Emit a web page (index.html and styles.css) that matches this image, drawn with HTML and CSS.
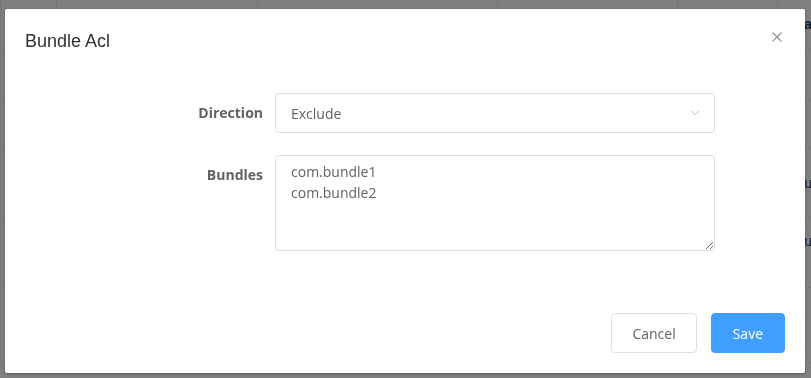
FILE: index.html
```html
<!DOCTYPE html>
<html lang="en">
<head>
    <meta charset="UTF-8">
    <meta name="viewport" content="width=device-width, initial-scale=1.0">
    <title>Bundle Acl</title>
    <link rel="stylesheet" href="styles.css">
</head>
<body>
    <!-- page behind the modal -->
    <table class="grid">
        <tr class="grid-head">
            <td class="c1"></td><td class="c2"></td><td class="c3"></td><td class="c4"></td><td class="c5"></td><td class="c6">Status</td>
        </tr>
        <tr class="r1"><td></td><td></td><td></td><td></td><td></td><td></td></tr>
        <tr class="r2"><td></td><td></td><td></td><td></td><td></td><td></td></tr>
        <tr class="r3"><td></td><td></td><td></td><td></td><td></td><td>Public</td></tr>
        <tr class="r4"><td></td><td></td><td></td><td></td><td></td><td class="top">Public</td></tr>
        <tr class="r5"><td></td><td></td><td></td><td></td><td></td><td></td></tr>
    </table>

    <div class="overlay">
        <div class="dialog">
            <div class="dialog-header">
                <span class="dialog-title">Bundle Acl</span>
                <button class="dialog-close" aria-label="Close">
                    <svg width="10" height="10" viewBox="0 0 10 10">
                        <path d="M0.5 0.5 L9.5 9.5 M9.5 0.5 L0.5 9.5" stroke="#909399" stroke-width="1.2" fill="none"/>
                    </svg>
                </button>
            </div>

            <div class="dialog-body">
                <form class="acl-form">
                    <div class="form-item">
                        <label class="form-label">Direction</label>
                        <div class="select">
                            <span>Exclude</span>
                            <svg class="select-arrow" width="10" height="6" viewBox="0 0 10 6">
                                <path d="M1 0.8 L5 4.8 L9 0.8" stroke="#b4b8c0" stroke-width="1" fill="none"/>
                            </svg>
                        </div>
                    </div>
                    <div class="form-item">
                        <label class="form-label" for="bundles">Bundles</label>
                        <textarea id="bundles" class="textarea" rows="4">com.bundle1
com.bundle2</textarea>
                    </div>
                </form>
            </div>

            <div class="dialog-footer">
                <button class="btn">Cancel</button>
                <button class="btn btn-primary">Save</button>
            </div>
        </div>
    </div>
</body>
</html>
```

FILE: styles.css
```css
* {
    box-sizing: border-box;
}

body {
    margin: 0;
    font-family: "Liberation Sans", Arial, sans-serif;
    background: #fff;
    overflow: hidden;
}

/* table behind the overlay */
.grid {
    border-collapse: collapse;
    width: 900px;
    margin-top: -1px;
    font-size: 14px;
    font-weight: bold;
    color: #606266;
}
.grid td {
    border-bottom: 1px solid #ebeef5;
    border-left: 1px solid #ebeef5;
    padding: 0 10px;
    white-space: nowrap;
}
.grid .c1 { width: 56px; }
.grid .c2 { width: 201px; }
.grid .c3 { width: 240px; }
.grid .c4 { width: 180px; }
.grid .c5 { width: 100px; }
.grid-head { height: 50px; }
.grid-head .c6 { color: #303133; padding-left: 12px; vertical-align: top; line-height: 50px; }
.grid-head td { line-height: 1; }
.r1 { height: 51px; }
.r2 { height: 48px; }
.r3 { height: 69px; }
.r4 { height: 70px; }
.r3 td, .r4 td { font-weight: normal; padding-left: 17px; color: #303133; }
.r4 .top { vertical-align: top; padding-top: 15px; }
.r5 { height: 75px; }

.overlay {
    position: fixed;
    top: 0;
    left: 0;
    right: 0;
    bottom: 0;
    background: rgba(0, 0, 0, 0.5);
}

.dialog {
    position: relative;
    width: 800px;
    margin: 9px 0 0 5px;
    background: #fff;
    border-radius: 2px;
    box-shadow: 0 1px 3px rgba(0, 0, 0, 0.3);
}

.dialog-header {
    padding: 20px 20px 10px;
}
.dialog-title {
    display: block;
    font-size: 18px;
    line-height: 24px;
    color: #303133;
}
.dialog-close {
    position: absolute;
    top: 23px;
    right: 23px;
    width: 10px;
    height: 10px;
    padding: 0;
    border: 0;
    background: none;
    display: flex;
}

.dialog-body {
    padding: 30px 20px;
}

.acl-form {
    margin-left: 150px;
    width: 540px;
    font-family: "Open Sans", "Liberation Sans", sans-serif;
    font-size: 14px;
    color: #606266;
}

.form-item {
    display: flex;
    margin-bottom: 22px;
}

.form-label {
    width: 100px;
    flex: none;
    padding-right: 12px;
    text-align: right;
    line-height: 40px;
    font-weight: 700;
    color: #606266;
}

.select {
    flex: 1;
    height: 40px;
    display: flex;
    align-items: center;
    justify-content: space-between;
    padding: 0 14px 0 15px;
    border: 1px solid #dcdfe6;
    border-radius: 4px;
}

.textarea {
    flex: 1;
    height: 96px;
    padding: 5px 15px;
    border: 1px solid #dcdfe6;
    border-radius: 4px;
    font-family: "Open Sans", "Liberation Sans", sans-serif;
    font-size: 14px;
    line-height: 1.5;
    color: #606266;
    resize: vertical;
    outline: none;
}

.dialog-footer {
    padding: 10px 20px 20px;
    display: flex;
    justify-content: flex-end;
    gap: 14px;
}

.btn {
    height: 40px;
    padding: 0 20px;
    border: 1px solid #dcdfe6;
    border-radius: 4px;
    background: #fff;
    font-family: "Open Sans", "Liberation Sans", sans-serif;
    font-size: 14px;
    color: #606266;
}
.btn-primary {
    padding: 0 21px;
    background: #409eff;
    border-color: #409eff;
    color: #fff;
}
```
